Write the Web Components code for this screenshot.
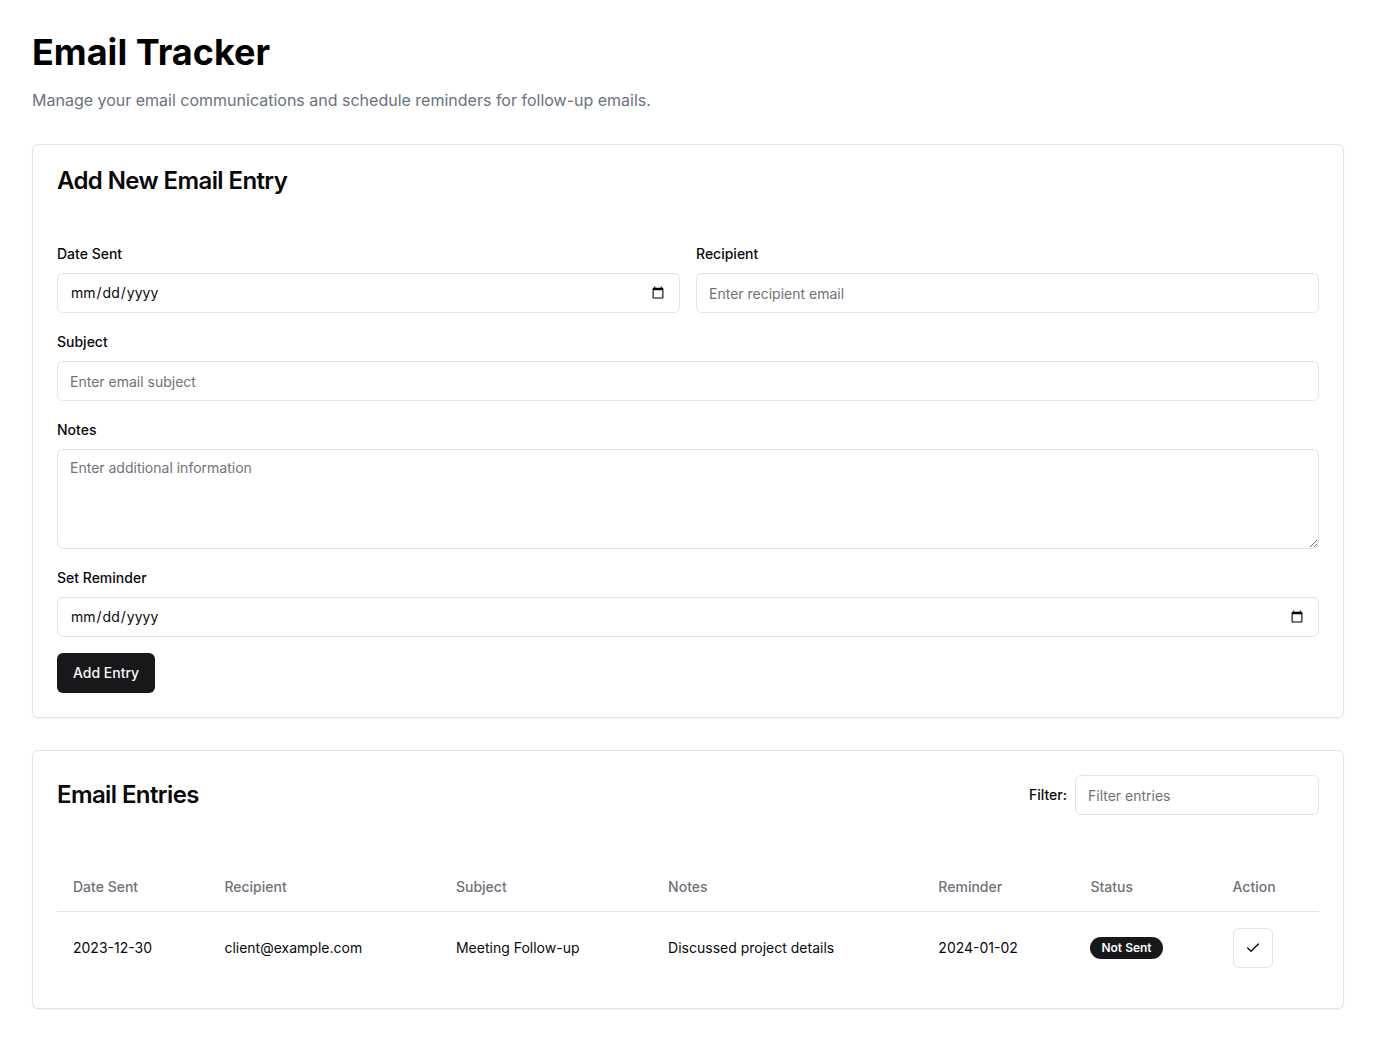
<!DOCTYPE html>
<html lang="en">
<head>
<meta charset="utf-8">
<title>Email Tracker</title>
<style>
:root{--fg:#09090b;--muted:#71717a;--heading:#000;--sub:#6b7280;--line:#e4e4e7;--primary:#18181b;--on-primary:#fafafa}
body{margin:0;background:#fff;color:var(--fg);font-family:Inter,"Liberation Sans",sans-serif;font-size:14px;line-height:20px}
</style>
</head>
<body>
<email-tracker></email-tracker>
<script>
const define = (name, html, setup) => {
  const template = document.createElement('template');
  template.innerHTML = '<style>*{box-sizing:border-box}[hidden]{display:none}</style>' + html;
  customElements.define(name, class extends HTMLElement {
    constructor() {
      super();
      this.attachShadow({mode: 'open'}).append(template.content.cloneNode(true));
    }
    connectedCallback() { if (setup) setup(this, this.shadowRoot); }
  });
};

define('tracker-card', `
<style>
:host{display:block;border:1px solid var(--line);border-radius:6px;box-shadow:0 1px 2px rgba(0,0,0,.05)}
header{display:flex;align-items:center;justify-content:space-between;padding:24px}
h2{margin:0;font-size:24px;line-height:24px;font-weight:600;letter-spacing:-.025em}
.content{padding:24px}
</style>
<header><h2><slot name="title"></slot></h2><slot name="tools"></slot></header>
<div class="content"><slot></slot></div>`);

define('form-field', `
<style>
:host{display:flex;flex-direction:column;gap:8px;min-width:0}
:host([inline]){flex-direction:row;align-items:center}
.caption{font-size:16px;line-height:24px}
:host([inline]) .caption{display:flex}
label{font-size:14px;line-height:14px;font-weight:500}
input,textarea{display:block;width:100%;margin:0;border:1px solid var(--line);border-radius:6px;padding:8px 12px;background:#fff;color:inherit;font:inherit}
input{height:40px}
textarea{height:100px;resize:vertical}
::placeholder{color:var(--muted);opacity:1}
</style>
<div class="caption"><label for="control"></label></div>`, (host, root) => {
  if (root.getElementById('control')) return;
  root.querySelector('label').textContent = host.getAttribute('label');
  const type = host.getAttribute('type') || 'text';
  const control = document.createElement(type === 'textarea' ? 'textarea' : 'input');
  if (type !== 'textarea') control.type = type;
  control.id = 'control';
  control.placeholder = host.getAttribute('placeholder') || '';
  root.append(control);
});

define('action-button', `
<style>
:host{display:inline-block}
button{display:flex;align-items:center;justify-content:center;height:40px;margin:0;padding:8px 16px;border:0;border-radius:6px;background:var(--primary);color:var(--on-primary);font:inherit;font-weight:500;cursor:pointer}
:host([icon]) button{width:40px;padding:0;border:1px solid var(--line);background:#fff;color:var(--fg)}
</style>
<button type="button"><slot></slot></button>`, (host, root) => {
  if (host.hasAttribute('label')) root.querySelector('button').setAttribute('aria-label', host.getAttribute('label'));
});

define('status-badge', `
<style>
:host{display:inline-flex;border:1px solid transparent;border-radius:99px;padding:2px 10px;background:var(--primary);color:var(--on-primary);font-size:12px;line-height:16px;font-weight:600;white-space:nowrap}
</style><slot></slot>`);

define('entry-form', `
<style>
:host{display:block}
form{display:flex;flex-direction:column;gap:16px}
.pair{display:grid;grid-template-columns:1fr 1fr;gap:16px}
</style>
<form>
<div class="pair"><form-field label="Date Sent" type="date"></form-field><form-field label="Recipient" type="email" placeholder="Enter recipient email"></form-field></div>
<form-field label="Subject" placeholder="Enter email subject"></form-field>
<form-field label="Notes" type="textarea" placeholder="Enter additional information"></form-field>
<form-field label="Set Reminder" type="date"></form-field>
<div><action-button>Add Entry</action-button></div>
</form>`);

define('entry-table', `
<style>
:host{display:block;overflow:auto}
table{width:100%;border-collapse:collapse}
th{height:48px;padding:0 16px;text-align:left;font-weight:500;color:var(--muted)}
thead tr{border-bottom:1px solid var(--line)}
td{padding:16px;vertical-align:middle}
action-button{display:block}
svg{display:block;width:16px;height:16px}
</style>
<table>
<thead><tr><th>Date Sent</th><th>Recipient</th><th>Subject</th><th>Notes</th><th>Reminder</th><th>Status</th><th>Action</th></tr></thead>
<tbody><tr><td>2023-12-30</td><td>client@example.com</td><td>Meeting Follow-up</td><td>Discussed project details</td><td>2024-01-02</td><td><status-badge>Not Sent</status-badge></td><td><action-button icon label="Mark as sent"><svg viewBox="0 0 24 24" fill="none" stroke="currentColor" stroke-width="2" stroke-linecap="round" stroke-linejoin="round" aria-hidden="true"><path d="M20 6 9 17l-5-5"/></svg></action-button></td></tr></tbody>
</table>`);

define('email-tracker', `
<style>
:host{display:block;padding:32px}
h1{margin:0 0 16px;color:var(--heading);font-size:36px;line-height:40px;font-weight:700}
p{margin:0 0 32px;color:var(--sub);font-size:16px;line-height:24px}
main{display:flex;flex-direction:column;gap:32px}
</style>
<h1>Email Tracker</h1>
<p>Manage your email communications and schedule reminders for follow-up emails.</p>
<main>
<tracker-card><span slot="title">Add New Email Entry</span><entry-form></entry-form></tracker-card>
<tracker-card><span slot="title">Email Entries</span><form-field slot="tools" inline label="Filter:" placeholder="Filter entries"></form-field><entry-table></entry-table></tracker-card>
</main>`);
</script>
</body>
</html>
